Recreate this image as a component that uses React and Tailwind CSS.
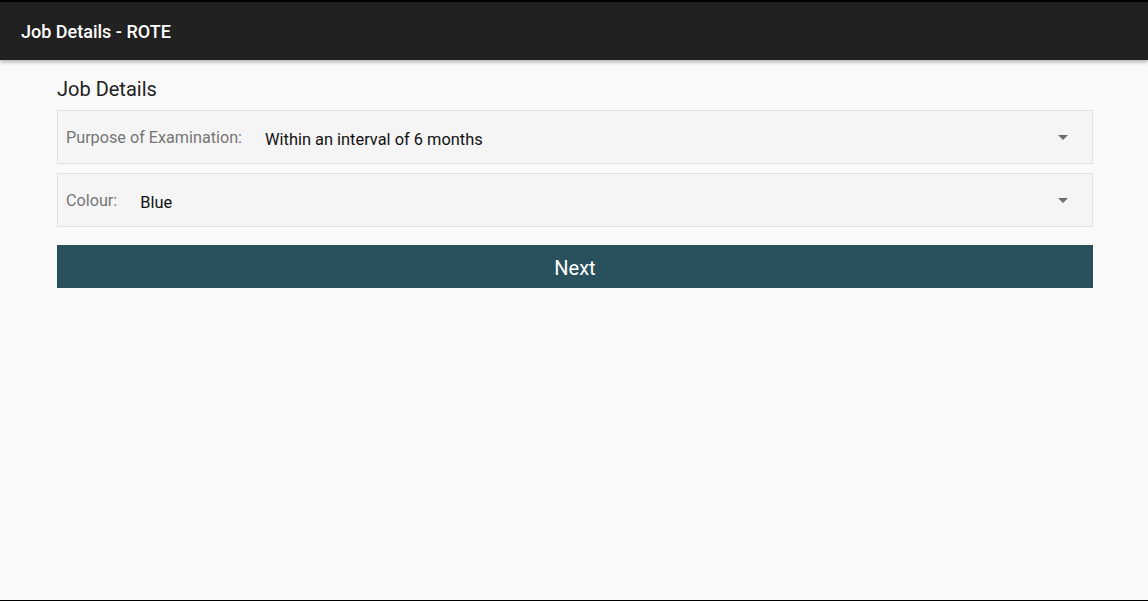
import React from "react";

const fields = [
  { label: "Purpose of Examination:", value: "Within an interval of 6 months" },
  { label: "Colour:", value: "Blue" },
];

function Caret() {
  return (
    <svg width="10" height="5" viewBox="0 0 10 5" className="shrink-0">
      <path d="M0 0 L10 0 L5 5 Z" fill="#6d6d6d" />
    </svg>
  );
}

function SelectField({ label, value }) {
  return (
    <div className="flex h-[54px] items-center border border-[#e2e2e2] bg-[#f5f5f5] pl-[8px] pr-[24px]">
      <span className="mt-[2px] text-[16.2px] leading-[20px] text-[#767676]">{label}</span>
      <span className="ml-[23px] mt-[6px] flex-1 text-[16.4px] leading-[20px] text-[#111111]">{value}</span>
      <div className="mt-[1px]">
        <Caret />
      </div>
    </div>
  );
}

export default function App() {
  return (
    <div
      className="flex h-[601px] w-[1148px] flex-col bg-[#fafafa]"
      style={{ fontFamily: "Roboto, 'Noto Sans', sans-serif" }}
    >
      <div className="h-[2px] bg-black" />
      <header className="relative z-10 flex h-[58px] items-center bg-[#212121] pl-[21px] pt-[2px] shadow-[0_2px_4px_rgba(0,0,0,0.3)]">
        <h1 className="text-[18px] font-medium leading-[22px] text-white">Job Details - ROTE</h1>
      </header>

      <main className="flex-1 pl-[57px] pr-[55px] pt-[17px]">
        <h2 className="mb-[9px] text-[20px] leading-[24px] text-[#222222]">Job Details</h2>
        <div className="flex flex-col gap-[9px]">
          {fields.map((field) => (
            <SelectField key={field.label} label={field.label} value={field.value} />
          ))}
        </div>
        <button className="mt-[18px] flex h-[43px] w-full items-center justify-center bg-[#29505d] pt-[2px] text-[20px] text-white">
          Next
        </button>
      </main>

      <div className="h-[1px] bg-black" />
    </div>
  );
}
